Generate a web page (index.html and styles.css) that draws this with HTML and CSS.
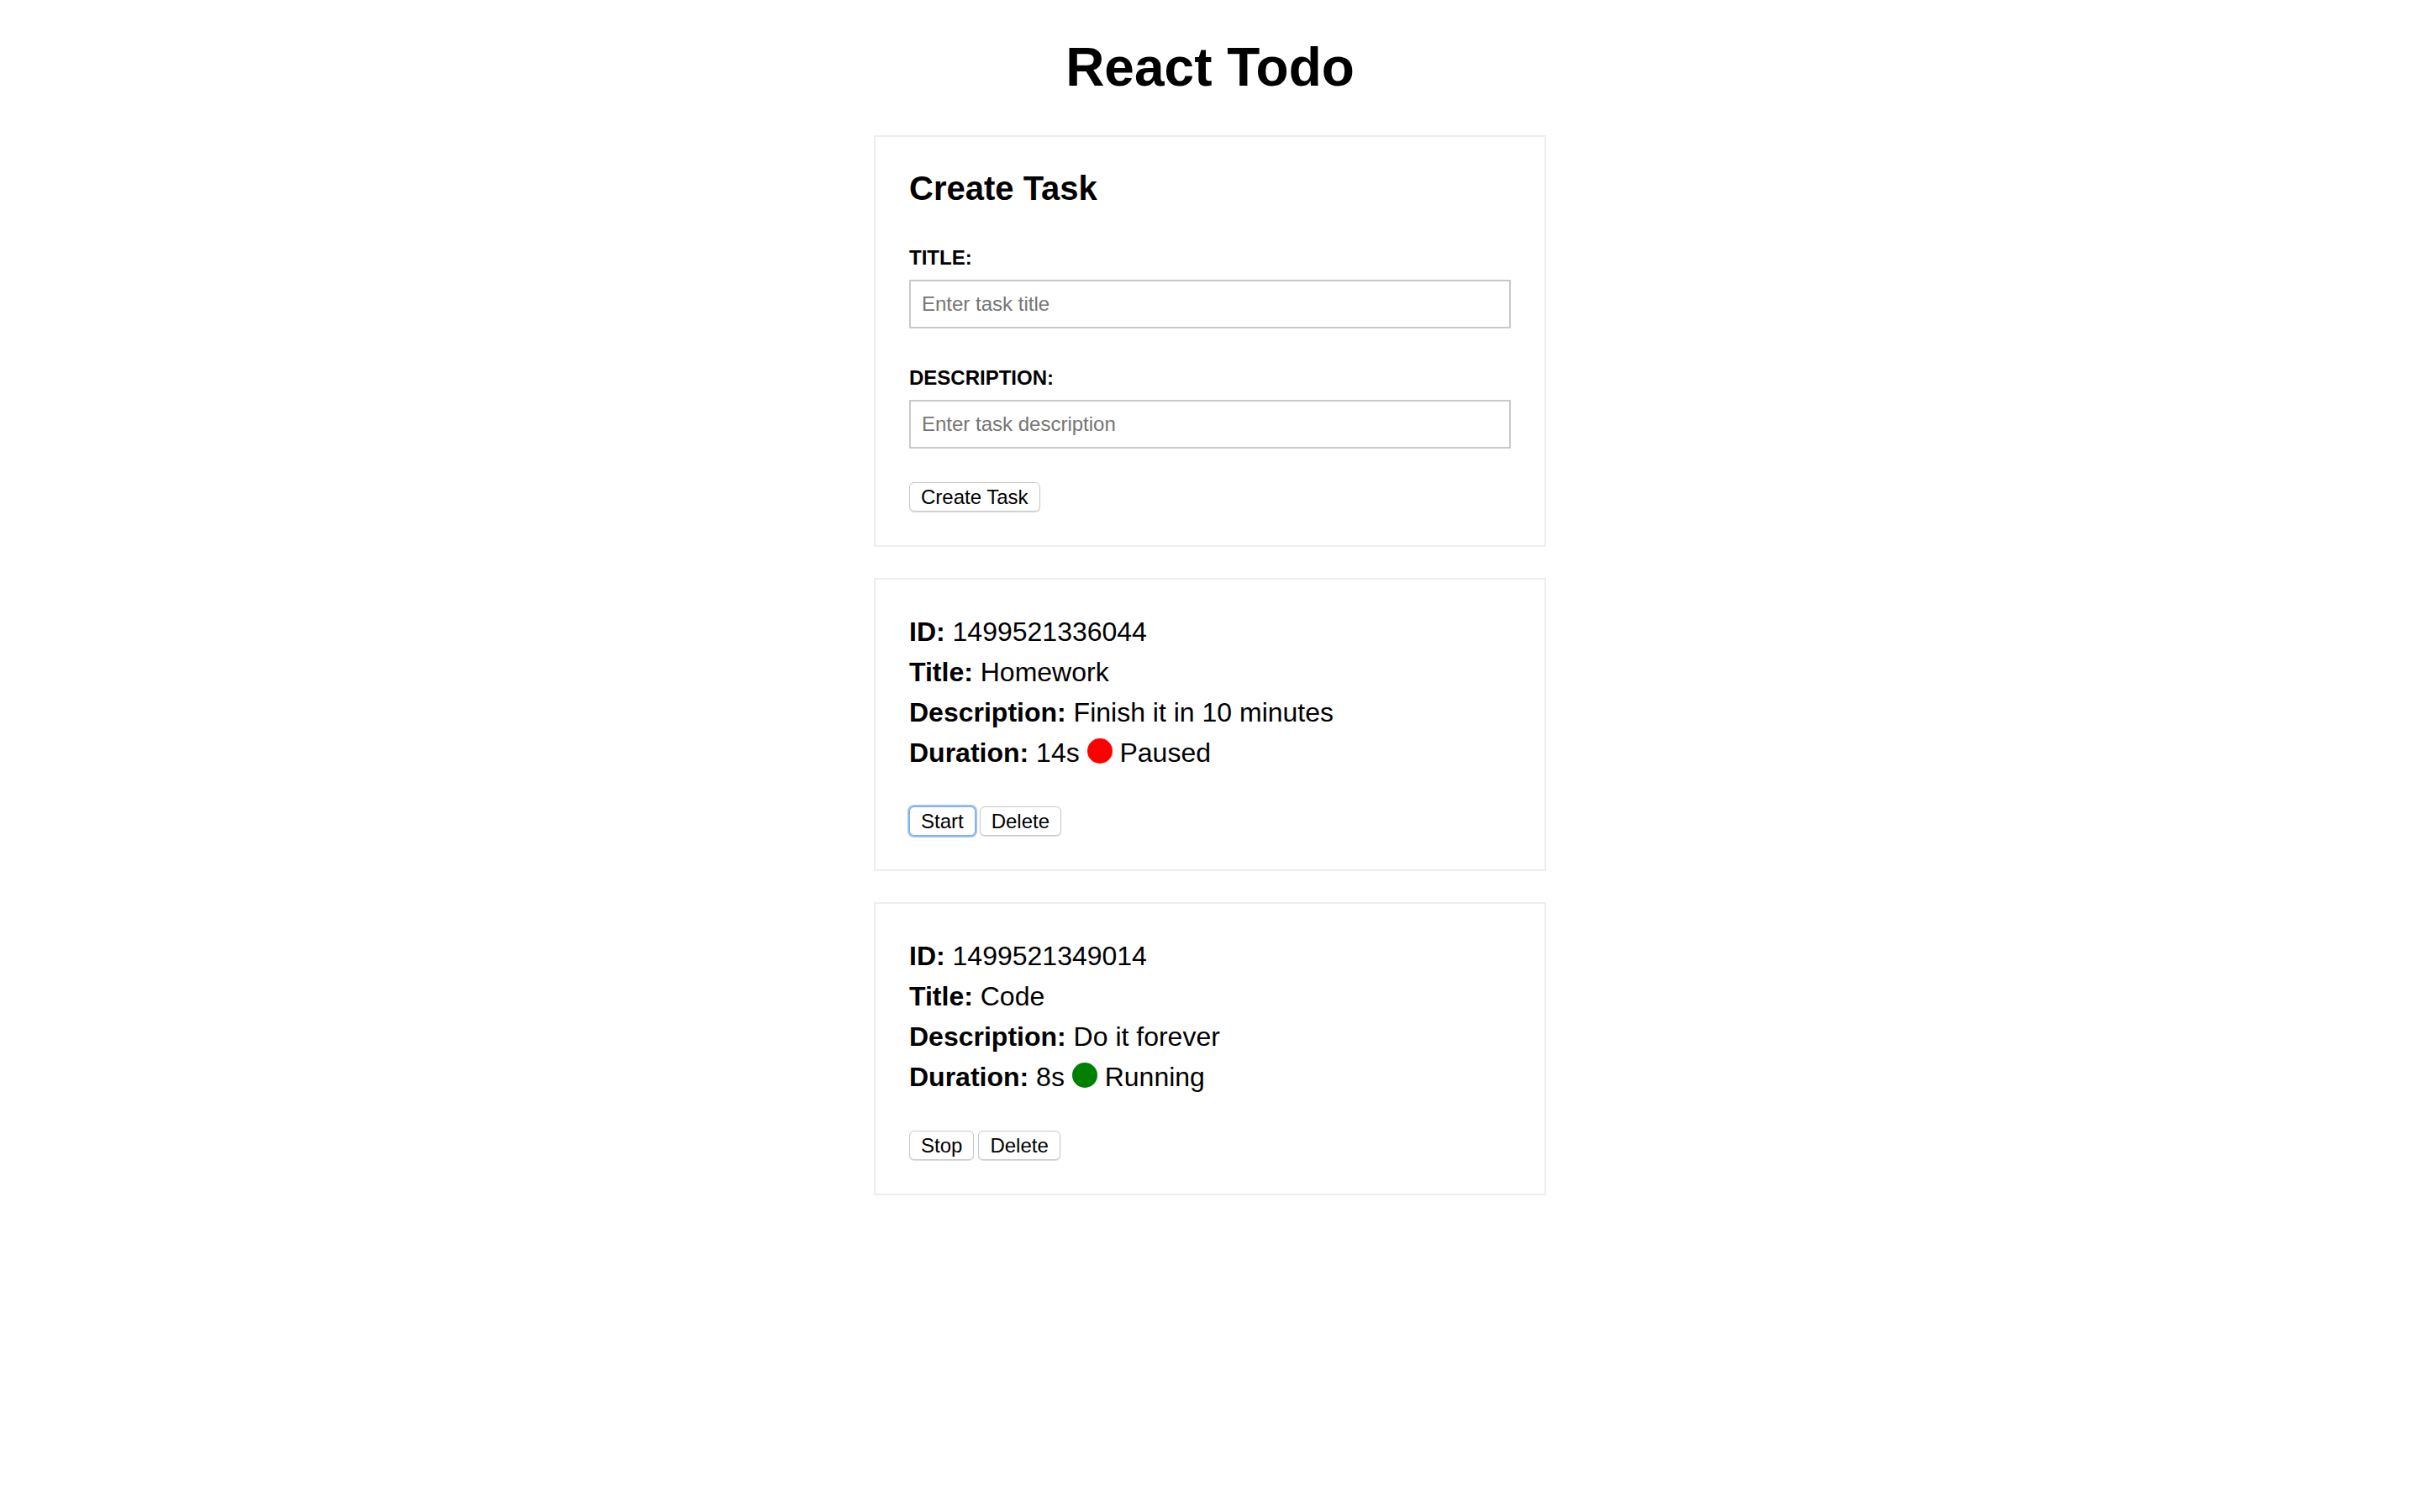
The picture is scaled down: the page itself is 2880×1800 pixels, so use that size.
FILE: index.html
```html
<!DOCTYPE html>
<html lang="en">
<head>
<meta charset="utf-8">
<title>React Todo</title>
<link rel="stylesheet" href="styles.css">
</head>
<body>
<div class="page">
  <h1 class="app-title">React Todo</h1>
  <main class="board">
    <section class="card">
      <h2 class="card-title">Create Task</h2>
      <div class="field">
        <label class="field-label" for="title">TITLE:</label>
        <input class="field-input" id="title" type="text" placeholder="Enter task title">
      </div>
      <div class="field">
        <label class="field-label" for="desc">DESCRIPTION:</label>
        <input class="field-input" id="desc" type="text" placeholder="Enter task description">
      </div>
      <div class="actions">
        <button class="btn" type="button">Create Task</button>
      </div>
    </section>

    <section class="card">
      <div class="task-info">
        <p class="task-line"><strong>ID:</strong> 1499521336044</p>
        <p class="task-line"><strong>Title:</strong> Homework</p>
        <p class="task-line"><strong>Description:</strong> Finish it in 10 minutes</p>
        <p class="task-line"><strong>Duration:</strong> 14s <span class="status-dot status-paused"></span> Paused</p>
      </div>
      <div class="actions">
        <button class="btn is-focused" type="button">Start</button>
        <button class="btn" type="button">Delete</button>
      </div>
    </section>

    <section class="card">
      <div class="task-info">
        <p class="task-line"><strong>ID:</strong> 1499521349014</p>
        <p class="task-line"><strong>Title:</strong> Code</p>
        <p class="task-line"><strong>Description:</strong> Do it forever</p>
        <p class="task-line"><strong>Duration:</strong> 8s <span class="status-dot status-running"></span> Running</p>
      </div>
      <div class="actions">
        <button class="btn" type="button">Stop</button>
        <button class="btn" type="button">Delete</button>
      </div>
    </section>
  </main>
</div>
</body>
</html>
```
FILE: styles.css
```css
* {
  box-sizing: border-box;
}

html, body {
  margin: 0;
  padding: 0;
  background: #ffffff;
}

body {
  font-family: "Liberation Sans", Arial, Helvetica, sans-serif;
  color: #000000;
}

.page {
  padding-top: 43px;
}

.app-title {
  margin: 0 0 44px;
  font-size: 64px;
  line-height: 74px;
  font-weight: bold;
  text-align: center;
}

.board {
  width: 800px;
  margin: 0 auto;
  display: flex;
  flex-direction: column;
  gap: 37px;
}

.card {
  border: 2px solid #eeeeee;
  padding: 38px 40px 40px;
}

.card-title {
  margin: 0 0 46px;
  font-size: 40px;
  line-height: 46px;
  font-weight: bold;
}

.field + .field {
  margin-top: 45px;
}

.field-label {
  display: block;
  margin-bottom: 12px;
  font-size: 24px;
  line-height: 28px;
  font-weight: bold;
}

.field-input {
  display: block;
  width: 100%;
  height: 58px;
  margin: 0;
  padding: 0 13px;
  border: 2px solid #c9c9c9;
  border-radius: 0;
  font-family: "Liberation Sans", Arial, sans-serif;
  font-size: 24px;
  color: #000000;
  background: #ffffff;
  outline: none;
}

.field-input::placeholder {
  color: #757575;
}

.actions {
  display: flex;
  gap: 5px;
  margin-top: 40px;
}

.btn {
  margin: 0;
  padding: 3px 13px;
  font-family: "Liberation Sans", Arial, sans-serif;
  font-size: 24px;
  line-height: 27px;
  color: #000000;
  background: #ffffff;
  border: 1px solid #c8c8c8;
  border-radius: 6px;
  box-shadow: 0 1px 1px rgba(0, 0, 0, 0.14);
  cursor: pointer;
}

.btn.is-focused {
  border-color: #7eaaef;
  box-shadow: 0 0 0 2px rgba(126, 170, 239, 0.75);
}

.task-info {
  font-size: 32px;
  line-height: 48px;
}

.task-line {
  margin: 0;
}

.status-dot {
  display: inline-block;
  width: 30px;
  height: 30px;
  border-radius: 50%;
  vertical-align: -2px;
}

.status-paused {
  background: #ff0000;
}

.status-running {
  background: #008000;
}
```
